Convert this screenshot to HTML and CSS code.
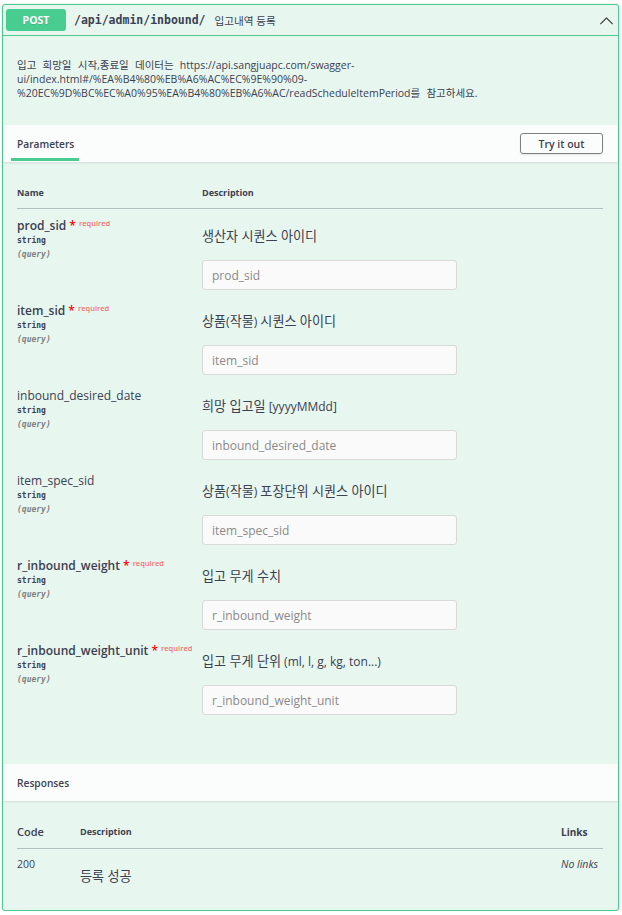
FILE: index.html
```html
<!DOCTYPE html>
<html lang="ko">
<head>
<meta charset="utf-8">
<title>POST /api/admin/inbound/</title>
<link rel="stylesheet" href="styles.css">
</head>
<body>
<div class="opblock">
  <div class="summary">
    <span class="method">POST</span>
    <span class="path">/api/admin/inbound/</span>
    <span class="summary-desc">입고내역 등록</span>
    <svg class="arrow" viewBox="0 0 20 20" width="15" height="15" aria-hidden="true"><path d="M17.418 14.908c.272.268.709.268.979 0 .27-.268.271-.701 0-.969l-7.908-7.83a.697.697 0 0 0-.979 0l-7.908 7.83c-.27.268-.27.701 0 .969.271.268.709.268.979 0L10 7.767l7.418 7.141z"/></svg>
  </div>
  <div class="description">
    <p>입고 희망일 시작,종료일 데이터는 https://api.sangjuapc.com/swagger-ui/index.html#/%EA%B4%80%EB%A6%AC%EC%9E%90%09-%20EC%9D%BC%EC%A0%95%EA%B4%80%EB%A6%AC/readScheduleItemPeriod를 참고하세요.</p>
  </div>
  <div class="section-header">
    <div class="tab">Parameters</div>
    <button class="try" type="button">Try it out</button>
  </div>
  <div class="params">
    <div class="prow phead">
      <div class="th">Name</div>
      <div class="th">Description</div>
    </div>
    <div class="prow">
      <div class="pname">
        <div class="name req">prod_sid<span class="star">&nbsp;*</span><span class="reqlabel">required</span></div>
        <div class="type">string</div>
        <div class="in">(query)</div>
      </div>
      <div class="pdesc">
        <p><span class="ko">생산자 시퀀스 아이디</span></p>
        <input type="text" disabled placeholder="prod_sid">
      </div>
    </div>
    <div class="prow">
      <div class="pname">
        <div class="name req">item_sid<span class="star">&nbsp;*</span><span class="reqlabel">required</span></div>
        <div class="type">string</div>
        <div class="in">(query)</div>
      </div>
      <div class="pdesc">
        <p><span class="ko">상품</span>(<span class="ko">작물</span>) <span class="ko">시퀀스 아이디</span></p>
        <input type="text" disabled placeholder="item_sid">
      </div>
    </div>
    <div class="prow">
      <div class="pname">
        <div class="name">inbound_desired_date</div>
        <div class="type">string</div>
        <div class="in">(query)</div>
      </div>
      <div class="pdesc">
        <p><span class="ko">희망 입고일</span> [yyyyMMdd]</p>
        <input type="text" disabled placeholder="inbound_desired_date">
      </div>
    </div>
    <div class="prow">
      <div class="pname">
        <div class="name">item_spec_sid</div>
        <div class="type">string</div>
        <div class="in">(query)</div>
      </div>
      <div class="pdesc">
        <p><span class="ko">상품</span>(<span class="ko">작물</span>) <span class="ko">포장단위 시퀀스 아이디</span></p>
        <input type="text" disabled placeholder="item_spec_sid">
      </div>
    </div>
    <div class="prow">
      <div class="pname">
        <div class="name req">r_inbound_weight<span class="star">&nbsp;*</span><span class="reqlabel">required</span></div>
        <div class="type">string</div>
        <div class="in">(query)</div>
      </div>
      <div class="pdesc">
        <p><span class="ko">입고 무게 수치</span></p>
        <input type="text" disabled placeholder="r_inbound_weight">
      </div>
    </div>
    <div class="prow">
      <div class="pname">
        <div class="name req">r_inbound_weight_unit<span class="star">&nbsp;*</span><span class="reqlabel">required</span></div>
        <div class="type">string</div>
        <div class="in">(query)</div>
      </div>
      <div class="pdesc">
        <p><span class="ko">입고 무게 단위</span> (ml, l, g, kg, ton...)</p>
        <input type="text" disabled placeholder="r_inbound_weight_unit">
      </div>
    </div>
  </div>
  <div class="section-header">
    <div class="sh-title">Responses</div>
  </div>
  <div class="responses">
    <div class="rrow rhead">
      <div class="rcode-h">Code</div>
      <div class="rdesc-h">Description</div>
      <div class="rlinks-h">Links</div>
    </div>
    <div class="rrow rbody">
      <div class="rcode">200</div>
      <div class="rdesc"><p><span class="ko">등록 성공</span></p></div>
      <div class="rlinks"><i>No links</i></div>
    </div>
  </div>
</div>
</body>
</html>
```
FILE: styles.css
```css
* { box-sizing: border-box; }

body {
  margin: 0;
  padding: 4px 3px 0 2px;
  background: #fff;
  color: #3b4151;
  font-family: "Open Sans", "Noto Sans CJK KR", sans-serif;
}

p { margin: 0; }

.ko { font-size: 1.09em; }

.opblock {
  border: 1px solid #49cc90;
  border-radius: 3px;
  background: #e8f6f0;
  box-shadow: 0 0 2px rgba(0, 0, 0, .19);
}

/* summary bar */
.summary {
  display: flex;
  align-items: center;
  height: 31px;
  padding: 0 3px 0 3px;
  border-bottom: 1px solid #49cc90;
}

.method {
  width: 60px;
  height: 22px;
  line-height: 22px;
  border-radius: 3px;
  background: #49cc90;
  color: #fff;
  font-size: 10.5px;
  font-weight: 700;
  text-align: center;
  text-shadow: 0 1px 0 rgba(0, 0, 0, .1);
}

.path {
  margin-left: 8px;
  font-family: "DejaVu Sans Mono", monospace;
  font-size: 11.5px;
  font-weight: 700;
  color: #3b4151;
}

.summary-desc {
  margin-left: 9px;
  font-size: 10.6px;
  color: #3b4151;
  flex: 1;
}

.arrow {
  fill: #333;
  margin-right: 1px;
}

/* description */
.description {
  padding: 22px 15px 25px 14px;
  font-size: 10.5px;
  line-height: 14px;
  word-spacing: 3.5px;
}

/* section headers */
.section-header {
  display: flex;
  align-items: center;
  justify-content: space-between;
  height: 37px;
  padding: 0 15px 0 8px;
  background: rgba(255, 255, 255, .8);
  box-shadow: 0 1px 2px rgba(0, 0, 0, .1);
  font-size: 10.2px;
  font-weight: 600;
}

.tab {
  align-self: stretch;
  display: flex;
  align-items: center;
  padding: 4px 5px 0 6px;
  margin-bottom: 1px;
  border-bottom: 3px solid #49cc90;
}

.sh-title { padding-left: 6px; }

.try {
  width: 83px;
  height: 21px;
  padding: 0;
  border: 1px solid #808080;
  border-radius: 3px;
  background: transparent;
  box-shadow: 0 1px 2px rgba(0, 0, 0, .1);
  color: #3b4151;
  font-family: inherit;
  font-size: 10.5px;
  font-weight: 600;
}

/* parameters */
.params {
  padding: 15px 15px 45px 14px;
}

.prow {
  display: grid;
  grid-template-columns: 185px 1fr;
}

.phead {
  padding: 10px 0 9px;
  border-bottom: 1px solid rgba(59, 65, 81, .3);
}

.th {
  font-size: 9px;
  line-height: 12px;
  font-weight: 700;
}

.prow:not(.phead) {
  height: 85px;
  padding-top: 8px;
}

.name {
  height: 18px;
  font-size: 12px;
  line-height: 18px;
  white-space: nowrap;
}

.name.req { font-weight: 600; }

.star {
  color: red;
  font-weight: 600;
  line-height: 0;
}

.reqlabel {
  padding-left: 3px;
  font-size: 7.5px;
  font-weight: 600;
  line-height: 0;
  color: rgba(255, 0, 0, .6);
  vertical-align: 4px;
}

.type {
  font-family: "DejaVu Sans Mono", monospace;
  font-size: 8px;
  font-weight: 700;
  line-height: 12px;
}

.in {
  margin-top: 2px;
  font-family: "DejaVu Sans Mono", monospace;
  font-size: 8px;
  font-weight: 700;
  font-style: italic;
  line-height: 12px;
  color: #808080;
}

.pdesc p {
  height: 18px;
  margin-top: 10px;
  font-size: 12px;
  line-height: 18px;
}

.pdesc input {
  display: block;
  width: 255px;
  height: 30px;
  margin-top: 15px;
  padding: 0 9px;
  border: 1px solid #d9d9d9;
  border-radius: 3px;
  background: #fafafa;
  font-family: inherit;
  font-size: 12px;
  color: #888;
}

.pdesc input::placeholder { color: #8a8a8a; }

/* responses */
.responses {
  padding: 15px 15px 15px 14px;
}

.rrow {
  display: grid;
  grid-template-columns: 63px 1fr 42px;
}

.rhead {
  align-items: center;
  padding: 8px 0;
  border-bottom: 1px solid rgba(59, 65, 81, .3);
  line-height: 16px;
}

.rcode-h {
  font-size: 11px;
  font-weight: 600;
}

.rdesc-h {
  font-size: 9px;
  font-weight: 700;
}

.rlinks-h {
  font-size: 10px;
  font-weight: 700;
}

.rbody {
  padding: 7px 0 10px;
}

.rcode {
  font-size: 10.5px;
  line-height: 16px;
}

.rdesc p {
  height: 18px;
  margin-top: 11px;
  font-size: 12px;
  line-height: 18px;
}

.rlinks {
  font-size: 10.5px;
  line-height: 16px;
  white-space: nowrap;
}
```
